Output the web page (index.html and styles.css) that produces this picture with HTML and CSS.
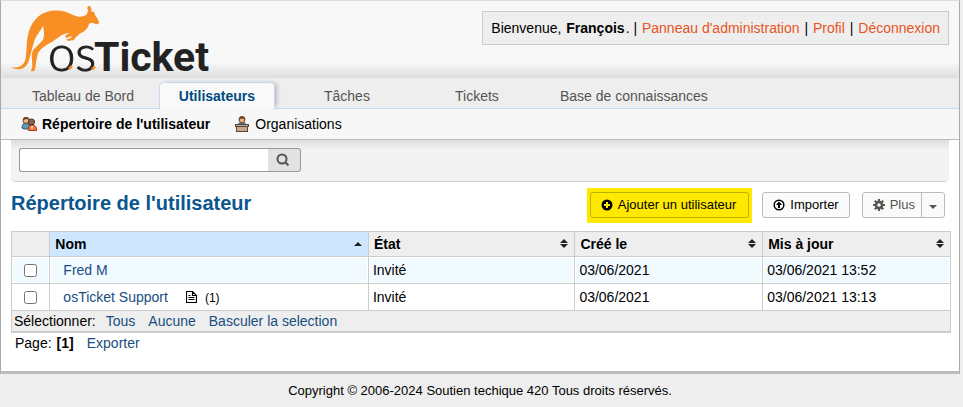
FILE: index.html
```html
<!DOCTYPE html>
<html lang="fr">
<head>
<meta charset="utf-8">
<title>osTicket</title>
<link rel="stylesheet" href="styles.css">
</head>
<body>
<div class="container">
  <header class="header">
    <a class="logo" href="#" aria-label="osTicket">
      <svg width="210" height="70" viewBox="10 5 210 70">
        <path fill="#f78f25" d="M10 67C16 68.500 22 67 24.500 62C27 57 26 44 28 35C30 24 38 13 50 11C60 9.500 67 11.500 73 15C79 18 84 17 87 14L88 11Q86.500 8 88 6L90 6Q91.500 8 91.500 12L94 11.500L95 15Q97 17 99 22Q99 25 95.500 24Q91 21.500 89 24C88 29 84 32 80 33.500L76 37L74 40L68 41L66 39.500L71 38L72 36L66 38L65 36L69 33C62 33 56 40 50 43Q42 47 38 53L36 62Q35.500 70 34 71L31 71.500Q33 66 32 60Q31 52 34 49L43 40Q45 34 43 26C40 32 36 35 34 42C31 51 30 61 26 66Q20 72 10 67Z"/>
        <text class="logo-light" x="48" y="71">os</text>
        <text class="logo-bold" x="94" y="71">Ticket</text>
        <path stroke="#f78f25" stroke-width="2.500" d="M69 69l3-3M92 69.500l3-3"/>
      </svg>
    </a>
    <p class="welcome">Bienvenue, <strong>François</strong>. | <a href="#">Panneau d'administration</a> | <a href="#">Profil</a> | <a href="#">Déconnexion</a></p>
  </header>
  <nav class="tabs">
    <a href="#">Tableau de Bord</a>
    <a class="active" href="#">Utilisateurs</a>
    <a href="#">Tâches</a>
    <a href="#">Tickets</a>
    <a href="#">Base de connaissances</a>
  </nav>
  <nav class="subnav">
    <a class="current" href="#">
      <svg width="16" height="16" viewBox="0 0 16 16">
        <path fill="#5d99bd" stroke="#35586b" d="M1 12Q1 7 5 7l4 2v4H3z"/>
        <circle cx="5" cy="4.500" r="3" fill="#e8b98d" stroke="#704321"/>
        <path fill="#704321" d="M2 4Q2 1 5 1t4 3L6 3z"/>
        <path fill="#f27435" stroke="#b4371d" d="M7.500 14.500Q6 9 11 9t4.500 5.500z"/>
        <path fill="#fff" d="M10 10h2l-1 4z"/>
        <circle cx="10.500" cy="6" r="3" fill="#8b684c" stroke="#3e2b20"/>
      </svg>
      Répertoire de l'utilisateur</a>
    <a href="#">
      <svg width="16" height="16" viewBox="0 0 16 16">
        <path fill="#4683ac" d="M4 10V8q0-2 4-2t4 2v2z"/>
        <circle cx="8" cy="4" r="2.800" fill="#edb37b" stroke="#704321"/>
        <path fill="#704321" d="M4.500 3.500Q5 0 8 0t3.500 3.500L8 2.500z"/>
        <path fill="#51483f" d="M1 8h14v3h-1v5H2v-5H1z"/>
        <path fill="#c7a78d" d="M2 9h12v1H2zM3 11h10v4H3z"/>
      </svg>
      Organisations</a>
  </nav>
  <main class="content">
    <form class="search">
      <input type="text" aria-label="Rechercher">
      <button type="button" aria-label="Rechercher">
        <svg width="14" height="14" viewBox="0 0 14 14" fill="none" stroke="#555" stroke-width="2"><circle cx="6" cy="6" r="4.500"/><path d="M9.500 9.500l3 3"/></svg>
      </button>
    </form>
    <div class="titlebar">
      <h1>Répertoire de l'utilisateur</h1>
      <div class="actions">
        <div class="highlight">
          <button class="action add" type="button">
            <svg width="12" height="12" viewBox="0 0 12 12"><circle cx="6" cy="6" r="5.500"/><path stroke="#ffe900" stroke-width="2" d="M6 3v6M3 6h6"/></svg>
            Ajouter un utilisateur</button>
        </div>
        <button class="action" type="button">
          <svg width="12" height="12" viewBox="0 0 12 12"><circle cx="6" cy="6" r="4.800" fill="none" stroke="#000" stroke-width="1.500"/><path d="M6 2.500L9 6H7v3H5V6H3z"/></svg>
          Importer</button>
        <button class="action more" type="button">
          <svg width="12" height="12" viewBox="0 0 12 12" fill="none" stroke="#555"><circle cx="6" cy="6" r="3" stroke-width="2.500"/><path stroke-width="2.200" d="M6 0v2.500M6 9.500V12M0 6h2.500M9.500 6H12M1.800 1.800l1.700 1.700M8.500 8.500l1.700 1.700M1.800 10.200l1.700-1.700M8.500 3.500l1.700-1.700"/></svg>
          Plus<span class="caret"></span></button>
      </div>
    </div>
    <table>
      <colgroup><col class="c-check"><col class="c-name"><col class="c-state"><col class="c-date"><col class="c-date"></colgroup>
      <thead>
        <tr>
          <th></th>
          <th class="sorted"><div class="th">Nom <svg width="8" height="10" viewBox="0 0 8 10"><path d="M0 7l4-4 4 4z"/></svg></div></th>
          <th><div class="th">État <svg width="8" height="10" viewBox="0 0 8 10"><path d="M0 4l4-4 4 4zM0 5h8l-4 4z"/></svg></div></th>
          <th><div class="th">Créé le <svg width="8" height="10" viewBox="0 0 8 10"><path d="M0 4l4-4 4 4zM0 5h8l-4 4z"/></svg></div></th>
          <th><div class="th">Mis à jour <svg width="8" height="10" viewBox="0 0 8 10"><path d="M0 4l4-4 4 4zM0 5h8l-4 4z"/></svg></div></th>
        </tr>
      </thead>
      <tbody>
        <tr class="odd">
          <td class="check"><input type="checkbox" aria-label="Fred M"></td>
          <td class="name"><a href="#">Fred M</a></td>
          <td>Invité</td><td>03/06/2021</td><td>03/06/2021 13:52</td>
        </tr>
        <tr>
          <td class="check"><input type="checkbox" aria-label="osTicket Support"></td>
          <td class="name"><a href="#">osTicket Support</a><svg class="file" width="11" height="12" viewBox="0 0 11 12" fill="none" stroke="#000"><path d="M.5.500h6l4 4v7H.5zM6.500.500v4h4M2.500 4.500h2M2.500 6.500h6M2.500 8.500h6" stroke-width="1.200"/></svg><small>(1)</small></td>
          <td>Invité</td><td>03/06/2021</td><td>03/06/2021 13:13</td>
        </tr>
      </tbody>
      <tfoot>
        <tr><td colspan="5"><div class="select">Sélectionner: <a href="#">Tous</a> <a href="#">Aucune</a> <a href="#">Basculer la selection</a></div></td></tr>
      </tfoot>
    </table>
    <div class="pages">Page: <strong>[1]</strong> <a href="#">Exporter</a></div>
  </main>
</div>
<footer>Copyright © 2006-2024 Soutien techique 420 Tous droits réservés.</footer>
</body>
</html>
```
FILE: styles.css
```css
* { box-sizing: border-box; }
body {
  margin: 0;
  background: #eee;
  color: #000;
  font: 14px/20px "Liberation Sans", Arial, sans-serif;
}
a { color: #184e81; text-decoration: none; }
svg { flex: none; }
.container {
  margin-right: 3px;
  background: #fff;
  border: 1px solid #aaa;
  border-top-color: #ddd;
  border-bottom: 3px solid #bbb;
}
.header {
  display: flex;
  justify-content: space-between;
  align-items: flex-start;
  height: 77px;
  padding: 4px 10px 0 9px;
  background: linear-gradient(#f8f8f8 80%, #dfdfdf);
  border-bottom: 1px solid #ddd;
}
.logo svg { display: block; overflow: visible; }
.logo-light { font: 300 49px Lato, sans-serif; fill: #222; stroke: #222; stroke-width: 1; }
.logo-bold { font: bold 41px Roboto, sans-serif; fill: #222; }
.welcome {
  margin: 6px 0 0;
  padding: 6px 8px;
  background: #eee;
  border: 1px solid #ccc;
}
.welcome a { margin: 0 1px; color: #e65524; }
.welcome strong { margin: 0 1px; }
.welcome a:last-child { margin-right: 0; }
.tabs {
  display: flex;
  gap: 14px;
  height: 31px;
  padding: 4px 20px 0;
  background: #eee;
  border-bottom: 1px solid #c5d9f1;
}
.tabs a {
  min-width: 116px;
  height: 27px;
  padding: 4px 11px 0;
  text-align: center;
  color: #555;
}
.tabs .active {
  padding-top: 3px;
  font-weight: bold;
  color: #004a80;
  background: #f9f9f9;
  border: 1px solid #c5d9f1;
  border-bottom: 0;
  border-radius: 5px 5px 0 0;
  box-shadow: 4px -1px 4px -2px #bbb;
}
.subnav {
  display: flex;
  gap: 24px;
  height: 31px;
  padding: 0 20px;
  align-items: center;
  background: #f7f7f7;
  border-bottom: 1px solid #bbb;
}
.subnav a { display: flex; align-items: center; gap: 5px; color: #000; }
.subnav .current { font-weight: bold; }
.content { padding: 0 8px 18px 10px; }
.search {
  display: flex;
  margin-right: 2px;
  padding: 8px 8px 9px;
  background: linear-gradient(#ddd, #f3f3f3 10px);
  border-bottom: 1px dotted #bbb;
  border-radius: 0 0 5px 5px;
}
.search input {
  width: 249px;
  height: 24px;
  border: 1px solid #999;
  border-right: 0;
  border-radius: 3px 0 0 3px;
  background: #fff;
}
.search button {
  display: flex;
  align-items: center;
  justify-content: center;
  width: 33px;
  height: 24px;
  padding: 0 2px 0 0;
  border: 1px solid #999;
  border-left: 0;
  border-radius: 0 3px 3px 0;
  background: #e2e2e2;
}
.titlebar {
  display: flex;
  justify-content: space-between;
  padding: 6px 6px 8px 0;
}
h1 { margin: 3px 0 0; font-size: 20px; line-height: 24px; color: #0a568e; }
.actions { display: flex; align-items: baseline; gap: 12px; }
.highlight { margin-right: -2px; padding: 4px 3px 5px; background: #ffe900; }
.action {
  display: flex;
  align-items: center;
  gap: 5px;
  height: 26px;
  padding: 0 10px;
  font: 13px/24px "Liberation Sans", Arial, sans-serif;
  color: #000;
  background: #fafafa;
  border: 1px solid #bbb;
  border-radius: 3px;
}
.action.add { padding: 0 12px 0 10px; background: #ffe900; border-color: #bdb000; }
.action.more { color: #555; padding-right: 0; }
.caret {
  display: flex;
  align-items: center;
  justify-content: center;
  width: 23px;
  height: 24px;
  margin-left: 1px;
  border-left: 1px solid #bbb;
}
.caret::after { content: ""; margin-top: 3px; border: 4px solid transparent; border-top-color: #555; border-bottom: 0; }
table {
  width: 100%;
  table-layout: fixed;
  border-spacing: 1px;
  background: #ccc;
  border-bottom: 1px solid #ccc;
}
.c-check { width: 4%; }
.c-name { width: 34%; }
.c-state { width: 22%; }
.c-date { width: 20%; }
th { height: 24px; padding: 0 6px 0 5px; background: #eee; text-align: left; }
th svg { fill: #222; }
.th { display: flex; align-items: center; justify-content: space-between; }
.sorted { background: #cfe6ff; }
td { height: 26px; padding: 0 4px; background: #fff; }
.odd td { background: #f0faff; border: 1px solid #fff; padding: 0 3px; }
td.check { padding: 0; text-align: center; }
.check input { display: block; width: 13px; height: 13px; margin: 0 auto; }
.name a { padding-left: 9px; }
.file { margin: 0 8px 0 18px; vertical-align: -1px; }
small { font-size: 12px; }
tfoot td { height: 20px; padding: 0 2px; background: #eee; }
.select { display: flex; gap: 13px; }
.select a:first-child { margin-left: -3px; }
.pages { display: flex; gap: 5px; padding-left: 4px; }
.pages a { margin-left: 8px; }
footer { padding: 7px 3px 0 0; text-align: center; font-size: 13px; }
```
